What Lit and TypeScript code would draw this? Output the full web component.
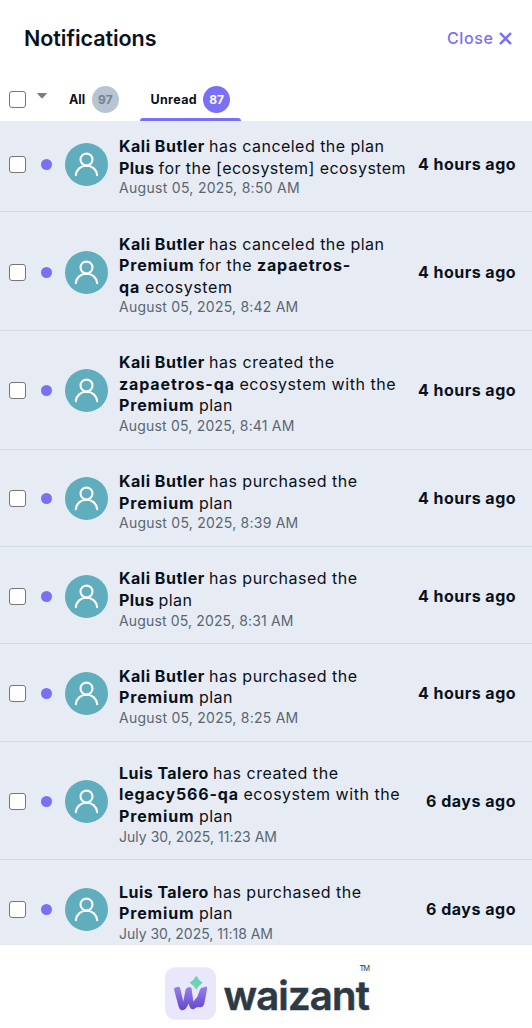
import { LitElement, html, css, svg } from "lit";
import { customElement, property } from "lit/decorators.js";

// Text run that is tracked out (or in) to occupy a given advance width.
@customElement("fit-text")
class FitText extends LitElement {
  @property() text = "";
  @property({ type: Number }) width = 0;

  static styles = css`
    :host { display: inline-block; white-space: pre; }
    .run { display: inline-block; }
  `;

  updated() {
    const run = this.renderRoot.querySelector(".run") as HTMLElement;
    run.style.letterSpacing = "0px";
    const natural = run.getBoundingClientRect().width;
    run.style.letterSpacing = `${(this.width - natural) / this.text.length}px`;
  }

  render() {
    return html`<span class="run">${this.text}</span>`;
  }
}

type Run = [text: string, width: number, bold?: boolean];
interface Item { lines: Run[][]; date: Run; ago: Run; }

const kali: Run = ["Kali Butler ", 90, true];
const luis: Run = ["Luis Talero ", 94, true];
const premium: Run = ["Premium ", 80, true];
const plus: Run = ["Plus ", 39.5, true];
const plan: Run = ["plan", 34];
const purchased: Run = ["has purchased the", 148.5];
const canceled: Run = ["has canceled the plan", 175.5];
const created: Run = ["has created the", 125.5];
const withThe: Run = ["ecosystem with the", 156.5];
const hours: Run = ["4 hours ago", 98];
const days: Run = ["6 days ago", 90];

const items: Item[] = [
  { lines: [[kali, canceled], [plus, ["for the [ecosystem] ecosystem", 247.5]]], date: ["August 05, 2025, 8:50 AM", 181], ago: hours },
  { lines: [[kali, canceled], [premium, ["for the ", 58], ["zapaetros-", 94, true]], [["qa ", 26, true], ["ecosystem", 87.5]]], date: ["August 05, 2025, 8:42 AM", 179.5], ago: hours },
  { lines: [[kali, created], [["zapaetros-qa ", 120.5, true], withThe], [premium, plan]], date: ["August 05, 2025, 8:41 AM", 175.5], ago: hours },
  { lines: [[kali, purchased], [premium, plan]], date: ["August 05, 2025, 8:39 AM", 179.5], ago: hours },
  { lines: [[kali, purchased], [plus, plan]], date: ["August 05, 2025, 8:31 AM", 174.5], ago: hours },
  { lines: [[kali, purchased], [premium, plan]], date: ["August 05, 2025, 8:25 AM", 179.5], ago: hours },
  { lines: [[luis, created], [["legacy566-qa ", 124.5, true], withThe], [premium, plan]], date: ["July 30, 2025, 11:23 AM", 158], ago: days },
  { lines: [[luis, purchased], [premium, plan]], date: ["July 30, 2025, 11:18 AM", 154], ago: days },
];

const fit = ([text, width, bold]: Run) =>
  html`<fit-text class=${bold ? "bold" : ""} .text=${text} .width=${width}></fit-text>`;

const person = svg`<g fill="none" stroke="#fff" stroke-width="2.1" stroke-linecap="round">
  <circle cx="21.5" cy="16.6" r="6"/>
  <path d="M10.8 32.2C11.4 26.6 15.6 22.8 21.5 22.8S31.6 26.6 32.2 32.2"/></g>`;

@customElement("app-root")
class AppRoot extends LitElement {
  static styles = css`
    :host {
      display: flex; flex-direction: column; width: 532px; height: 1028px; overflow: hidden;
      background: #fff; color: #0a1119; font-family: Inter, sans-serif; font-size: 16px;
    }
    * { box-sizing: border-box; }
    svg { display: block; }
    .header { display: flex; align-items: center; justify-content: space-between; height: 76px; padding: 0 20.5px 0 24px; flex: none; }
    .title { font-size: 21.5px; font-weight: 600; }
    .close { display: flex; align-items: center; gap: 5px; color: #7b70f5; font-weight: 500; font-size: 16px; }
    .tabs { display: flex; height: 45px; padding-left: 9px; flex: none; font-size: 12.5px; font-weight: 700; }
    .box { width: 17px; height: 17px; border: 1.3px solid #767676; border-radius: 3px; background: #fff; flex: none; }
    .tabs .box { margin-top: 15px; }
    .caret { margin: 17px 0 0 11px; width: 10px; height: 6px; flex: none; }
    .tab { display: flex; align-items: center; height: 45px; padding-top: 1px; }
    .tab.all { margin-left: 22px; width: 50px; gap: 7px; }
    .tab.unread { margin-left: 21px; width: 101px; padding-left: 10.5px; gap: 6px; }
    .tabcol { display: flex; flex-direction: column; }
    .badge { display: grid; place-items: center; width: 27px; height: 27px; border-radius: 50%; flex: none; font-size: 12px; }
    .badge.grey { background: #b7c4d1; color: #75838f; }
    .badge.violet { background: #7b70f5; color: #fff; }
    .bar { height: 3px; margin: -3px 0 0 21px; width: 101px; background: #7b70f5; border-radius: 3px 3px 0 0; }
    .list { flex: none; height: 824px; overflow: hidden; background: #e7ebf4; }
    .row { display: flex; align-items: center; border-bottom: 1px solid #d3dae3; padding: 0 16px 0 9px; height: 97.25px; }
    .row.tall { height: 118.8px; }
    .row:first-child { margin-top: -6px; }
    .row .box, .dot, .avatar { margin-top: 2px; }
    .dot { width: 11px; height: 11px; border-radius: 50%; background: #7b70f5; margin-left: 15px; flex: none; }
    .avatar { width: 43px; height: 43px; border-radius: 50%; background: #60adbd; margin-left: 13px; flex: none; }
    .body { flex: 1; margin-left: 11px; padding-top: 9px; }
    .line { height: 21.6px; line-height: 21.6px; white-space: nowrap; display: flex; }
    .bold { font-weight: 700; }
    .date { height: 19.5px; line-height: 18.5px; font-size: 14px; color: #596772; }
    .ago { font-weight: 700; flex: none; padding-top: 1px; }
    .footer { flex: 1; display: flex; align-items: flex-start; padding: 22px 0 0 165px; color: #2d3a45; }
    .word { margin-left: 7.5px; font-size: 40px; font-weight: 600; line-height: 50px; margin-top: 3.5px; -webkit-text-stroke: 0.6px #2d3a45; height: 50px; }
    .tm { font-size: 7.5px; line-height: 8px; margin-left: -9.5px; margin-top: -2px; }
  `;

  row(item: Item) {
    return html`<div class="row ${item.lines.length > 2 ? "tall" : ""}">
      <span class="box"></span><span class="dot"></span>
      <span class="avatar"><svg width="43" height="43" viewBox="0 0 43 43">${person}</svg></span>
      <div class="body">
        ${item.lines.map((line) => html`<div class="line">${line.map(fit)}</div>`)}
        <div class="date">${fit(item.date)}</div>
      </div>
      <div class="ago">${fit(item.ago)}</div>
    </div>`;
  }

  render() {
    return html`
      <div class="header">
        <div class="title">${fit(["Notifications", 132.5])}</div>
        <div class="close">${fit(["Close", 46.5])}
          <svg width="13" height="13" viewBox="0 0 13 13"><path d="M1.7 1.7L11.3 11.3M11.3 1.7L1.7 11.3" stroke="#7b70f5" stroke-width="2.4" stroke-linecap="round"/></svg>
        </div>
      </div>
      <div class="tabs">
        <span class="box"></span>
        <svg class="caret" viewBox="0 0 10 6"><path d="M.7 0H9.3Q10.2 0 9.6 .8L6 4.8Q5 5.8 4 4.8L.4 .8Q-.2 0 .7 0Z" fill="#71808f"/></svg>
        <div class="tab all">${fit(["All", 16])}<span class="badge grey">${fit(["97", 15])}</span></div>
        <div class="tabcol">
          <div class="tab unread">${fit(["Unread", 46.5])}<span class="badge violet">${fit(["87", 14.5])}</span></div>
          <div class="bar"></div>
        </div>
      </div>
      <div class="list">${items.map((item) => this.row(item))}</div>
      <div class="footer">
        <svg width="51" height="53" viewBox="0 0 153 158">
          <defs><linearGradient id="w" x1="0" y1="0" x2="0" y2="1"><stop offset="0" stop-color="#9683ea"/><stop offset="1" stop-color="#6545cb"/></linearGradient></defs>
          <rect width="153" height="158" rx="31" fill="#e8e7fc"/>
          <path d="M27 66Q27 61 33 60L40 59Q45 59 46 65L55 103L61 70Q63 61 70 60H76Q81 61 80 67L85 103L97 89L105 67Q108 60 116 60L123 58Q128 59 126 66L118 109Q115 121 104 120Q95 118 88 125Q79 130 74 119L71 110L63 123Q57 131 49 129Q43 127 40 116Z" fill="url(#w)"/>
          <path d="M94 26Q101 39 113 47Q101 55 94 68Q87 55 74 47Q87 39 94 26Z" fill="#70d1ae"/>
        </svg>
        <div class="word">${fit(["waizant", 145.5])}</div>
        <div class="tm">${fit(["TM", 9.5])}</div>
      </div>`;
  }
}
